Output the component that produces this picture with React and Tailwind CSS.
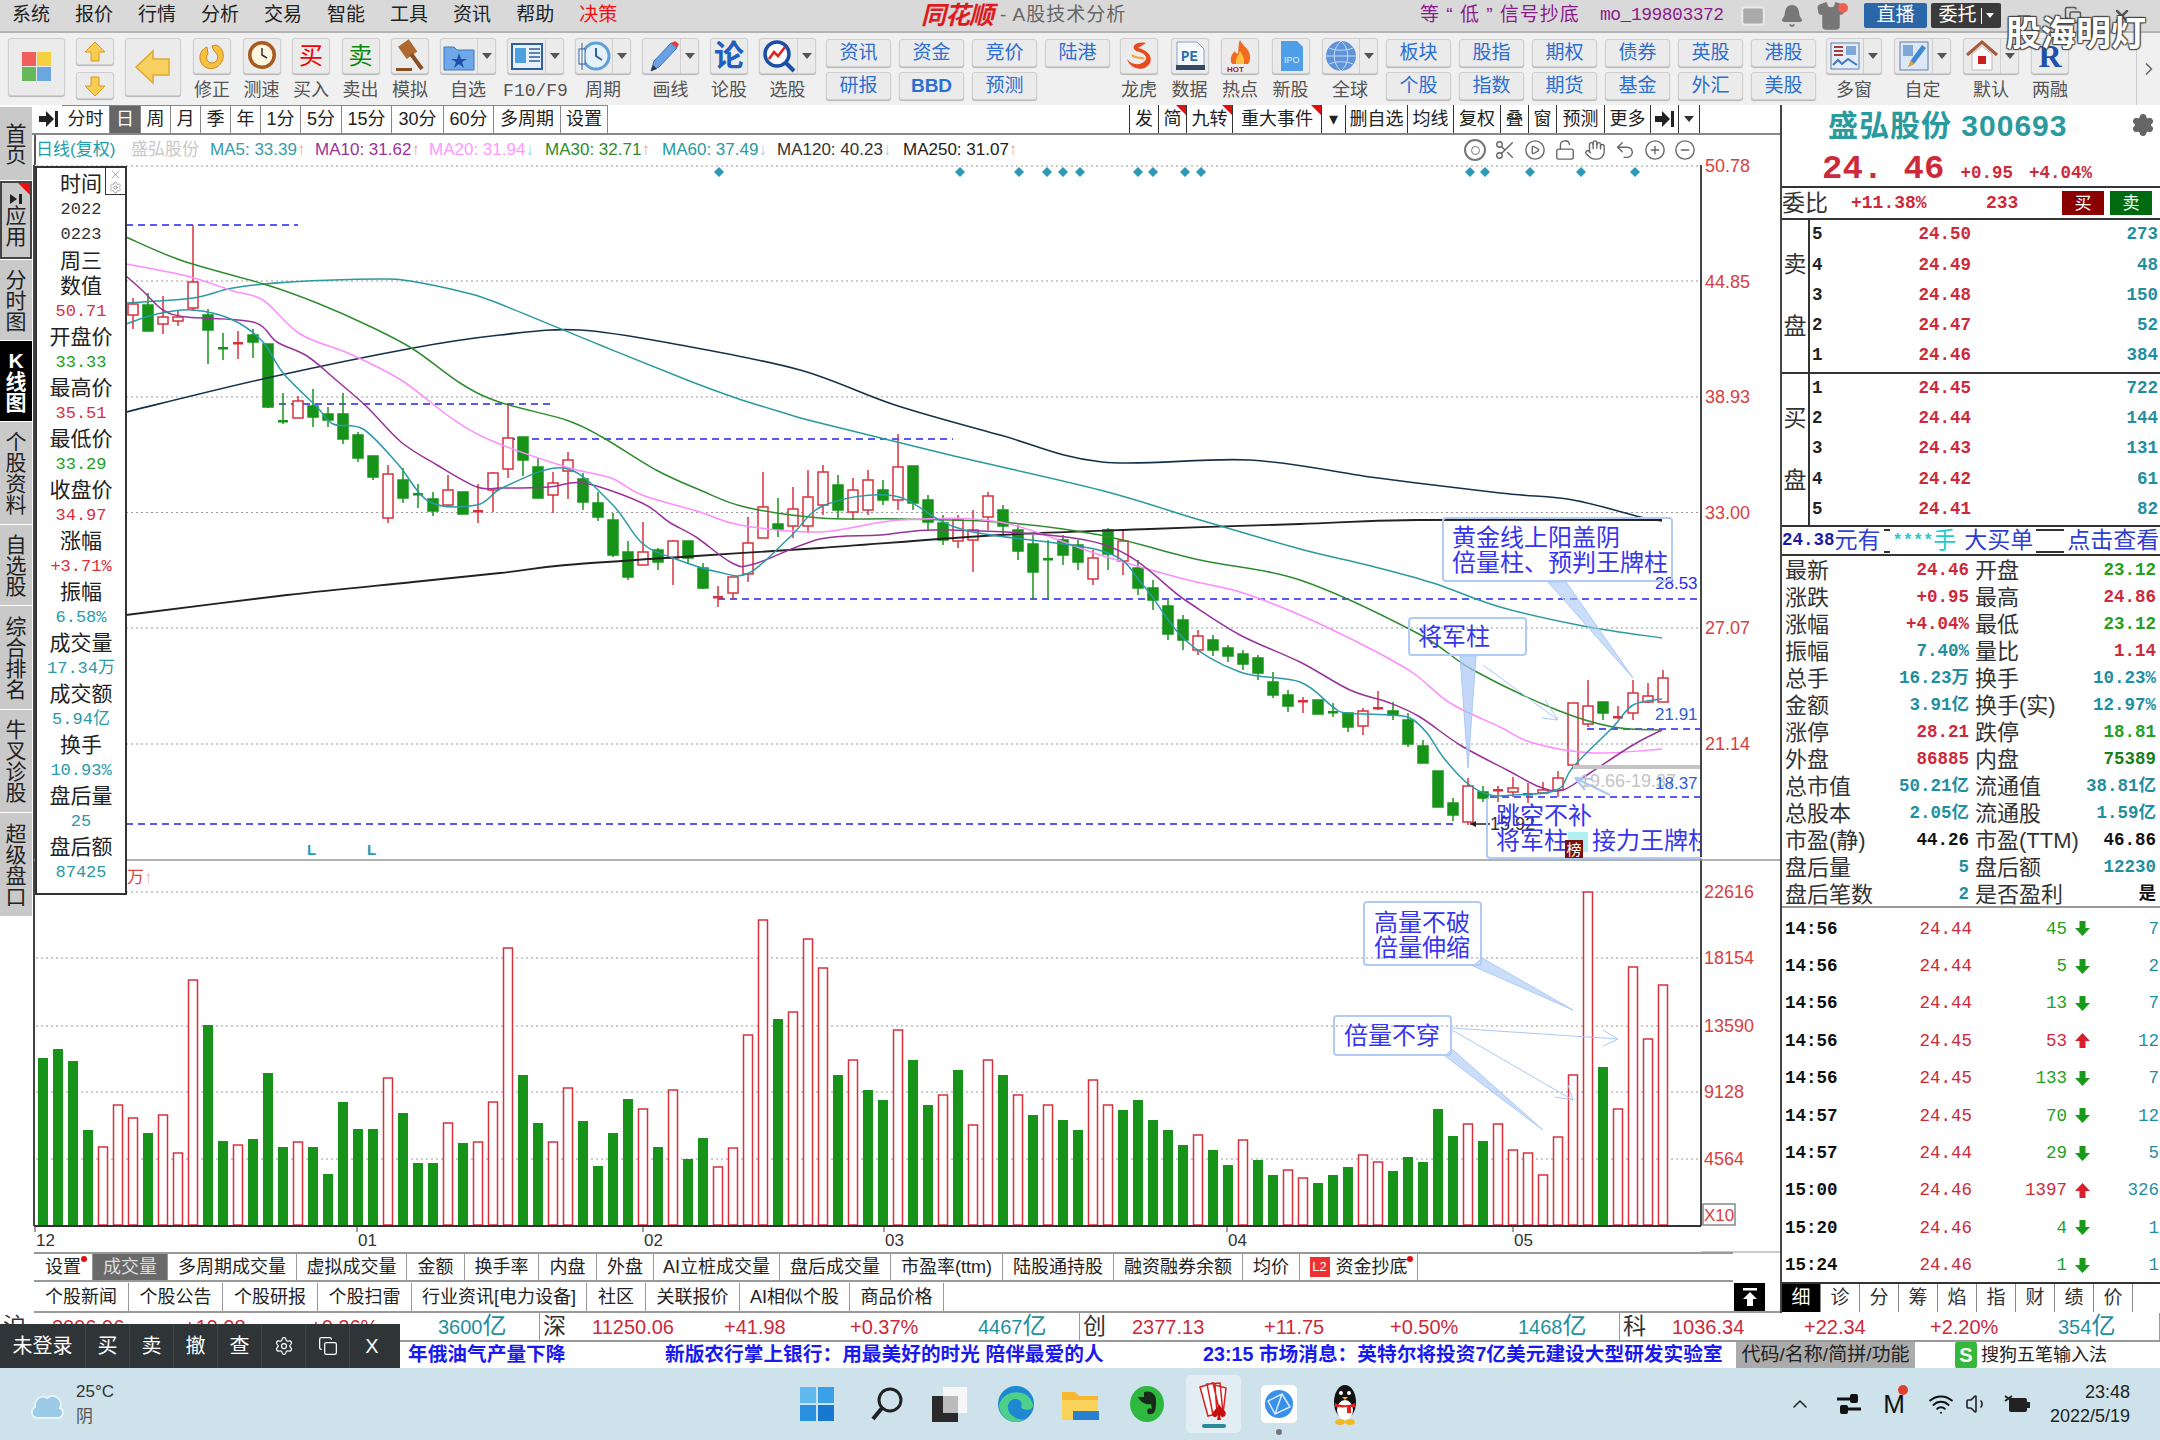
import React from "react";
import { Scissors, Hand, Undo2, CirclePlus, CircleMinus, CirclePlay, LockOpen, Settings, ChevronUp, Wifi, Volume1, Mail, Bell, Shirt, Copy, X, Minus, ChevronRight } from "lucide-react";

const sans = "[font-family:'Liberation_Sans','Noto_Sans_CJK_SC',sans-serif]";
const mono = "[font-family:'Liberation_Mono','Noto_Sans_CJK_SC',monospace]";

// x, type (u red hollow / d green), body top, body bottom, high, low -- page pixels
const candles = [
  [133, "u", 304, 315, 298, 329], [148, "d", 305, 331, 293, 331], [163, "u", 317, 324, 296, 334], [178, "u", 317, 321, 310, 326],
  [193, "u", 282, 308, 225, 311], [208, "d", 315, 330, 309, 364], [223, "d", 347, 348, 333, 360], [238, "u", 342, 343, 331, 359],
  [253, "d", 335, 342, 329, 358], [268, "d", 344, 407, 344, 408], [283, "d", 420, 421, 393, 424], [298, "u", 401, 418, 396, 418],
  [313, "d", 406, 417, 389, 427], [328, "d", 414, 420, 407, 427], [343, "d", 414, 439, 393, 444], [358, "d", 435, 458, 432, 462],
  [373, "d", 456, 477, 456, 480], [388, "u", 474, 518, 465, 523], [403, "d", 480, 498, 468, 503], [418, "d", 493, 494, 484, 508],
  [433, "d", 499, 511, 492, 516], [448, "u", 490, 505, 475, 507], [463, "d", 492, 514, 492, 514], [478, "u", 510, 511, 484, 523],
  [493, "u", 473, 490, 472, 512], [508, "u", 438, 469, 403, 478], [523, "d", 437, 460, 437, 476], [538, "d", 467, 498, 458, 498],
  [553, "u", 483, 495, 472, 513], [568, "u", 460, 471, 452, 499], [583, "d", 479, 502, 473, 510], [598, "d", 503, 517, 492, 521],
  [613, "d", 520, 555, 513, 557], [628, "d", 552, 577, 541, 580], [643, "u", 552, 565, 522, 565], [658, "d", 550, 562, 548, 570],
  [673, "u", 541, 558, 540, 585], [688, "d", 541, 558, 541, 564], [703, "d", 568, 588, 563, 589], [718, "u", 596, 597, 586, 607],
  [733, "u", 577, 593, 577, 600], [748, "u", 543, 574, 517, 582], [763, "u", 507, 538, 472, 538], [778, "d", 524, 529, 498, 537],
  [793, "u", 509, 526, 487, 538], [808, "u", 497, 526, 470, 533], [823, "u", 472, 505, 465, 515], [838, "d", 485, 510, 475, 518],
  [853, "u", 490, 512, 478, 520], [868, "u", 480, 510, 470, 515], [883, "d", 490, 500, 480, 505], [898, "u", 467, 500, 434, 510],
  [913, "d", 466, 503, 466, 510], [928, "d", 500, 522, 495, 530], [943, "d", 523, 540, 515, 545], [958, "u", 520, 541, 515, 548],
  [973, "u", 530, 540, 510, 572], [988, "u", 496, 517, 492, 530], [1003, "d", 510, 526, 505, 535], [1018, "d", 530, 551, 525, 560],
  [1033, "d", 544, 572, 535, 600], [1048, "d", 558, 559, 540, 600], [1063, "d", 540, 555, 535, 565], [1078, "d", 545, 562, 540, 570],
  [1093, "u", 558, 579, 550, 585], [1108, "d", 530, 554, 528, 570], [1123, "u", 541, 561, 530, 575], [1138, "d", 568, 588, 560, 595],
  [1153, "d", 588, 600, 580, 610], [1168, "d", 606, 634, 600, 640], [1183, "d", 620, 640, 615, 650], [1198, "u", 636, 650, 630, 655],
  [1213, "d", 640, 650, 635, 656], [1228, "d", 648, 656, 645, 662], [1243, "d", 654, 664, 650, 670], [1258, "d", 658, 673, 655, 680],
  [1273, "d", 682, 695, 672, 698], [1288, "d", 695, 706, 690, 712], [1303, "u", 700, 701, 697, 713], [1318, "d", 700, 714, 700, 714],
  [1333, "d", 711, 712, 703, 717], [1348, "d", 713, 727, 713, 732], [1363, "u", 711, 726, 708, 735], [1378, "u", 707, 708, 691, 710],
  [1393, "d", 711, 715, 702, 720], [1408, "d", 720, 744, 713, 747], [1423, "d", 746, 763, 740, 763], [1438, "d", 771, 807, 771, 807],
  [1453, "d", 803, 815, 798, 821], [1468, "u", 786, 822, 778, 825], [1483, "d", 792, 798, 786, 802], [1498, "u", 789, 790, 786, 802],
  [1513, "u", 788, 792, 777, 797], [1528, "u", 793, 794, 783, 803], [1543, "u", 790, 793, 782, 793], [1558, "u", 778, 790, 771, 797],
  [1573, "u", 703, 765, 703, 769], [1588, "u", 706, 724, 680, 727], [1603, "d", 702, 713, 702, 720], [1618, "u", 716, 717, 706, 719],
  [1633, "u", 693, 713, 680, 720], [1648, "u", 696, 702, 683, 703], [1663, "u", 678, 702, 670, 702],
];

// volume bar tops from x=43 in 15px steps, "u" red hollow / "d" green
const volumes = [
  ["d", 1058], ["d", 1049], ["d", 1061], ["d", 1130], ["u", 1147], ["u", 1105], ["u", 1118], ["d", 1133], ["u", 1115], ["u", 1153],
  ["u", 980], ["d", 1025], ["d", 1141], ["u", 1145], ["d", 1139], ["d", 1073], ["d", 1147], ["u", 1142], ["d", 1147], ["d", 1174],
  ["d", 1102], ["d", 1129], ["d", 1129], ["u", 1078], ["d", 1113], ["d", 1163], ["d", 1163], ["u", 1123], ["d", 1143], ["u", 1142],
  ["u", 1102], ["u", 948], ["d", 1075], ["d", 1123], ["u", 1142], ["u", 1088], ["d", 1121], ["d", 1166], ["d", 1133], ["d", 1099],
  ["u", 1109], ["d", 1147], ["u", 1090], ["d", 1159], ["d", 1138], ["u", 1167], ["u", 1148], ["u", 1035], ["u", 920], ["d", 1019],
  ["u", 1012], ["u", 939], ["u", 968], ["d", 1075], ["u", 1060], ["d", 1090], ["d", 1100], ["u", 1030], ["d", 1060], ["d", 1105],
  ["u", 1095], ["d", 1070], ["u", 1125], ["u", 1060], ["d", 1075], ["u", 1095], ["d", 1115], ["u", 1105], ["d", 1120], ["d", 1130],
  ["u", 1080], ["u", 1105], ["d", 1110], ["d", 1100], ["d", 1120], ["d", 1130], ["d", 1145], ["u", 1135], ["d", 1150], ["d", 1165],
  ["u", 1140], ["d", 1160], ["d", 1175], ["u", 1170], ["u", 1178], ["d", 1183], ["d", 1175], ["d", 1167], ["u", 1155], ["u", 1162],
  ["d", 1171], ["d", 1157], ["d", 1162], ["d", 1109], ["d", 1136], ["u", 1124], ["d", 1141], ["u", 1124], ["u", 1150], ["u", 1153],
  ["u", 1175], ["u", 1137], ["u", 1075], ["u", 892], ["d", 1067], ["u", 1109], ["u", 967], ["u", 1039], ["u", 985],
];

const maLines = [
  { color: "#16304a", w: 1.6, pts: [[126, 412], [267, 378], [413, 348], [500, 335], [580, 330], [680, 345], [800, 370], [895, 405], [1000, 435], [1102, 462], [1250, 460], [1378, 478], [1500, 493], [1573, 500], [1640, 517], [1662, 521]] },
  { color: "#222222", w: 1.8, pts: [[126, 615], [287, 595], [413, 582], [500, 573], [566, 565], [696, 556], [820, 548], [1000, 535], [1150, 529], [1300, 524], [1417, 520], [1662, 520]] },
  { color: "#2a9a9e", w: 1.5, pts: [[126, 303], [193, 298], [233, 288], [290, 282], [380, 279], [410, 281], [467, 293], [500, 304], [600, 345], [687, 380], [736, 398], [781, 412], [820, 423], [950, 455], [1100, 490], [1200, 520], [1300, 549], [1367, 565], [1433, 583], [1500, 607], [1583, 626], [1662, 638]] },
  { color: "#2f8b2f", w: 1.5, pts: [[126, 237], [183, 261], [267, 285], [317, 303], [367, 325], [413, 349], [460, 383], [499, 402], [566, 420], [602, 437], [656, 470], [700, 490], [745, 507], [820, 518], [900, 519], [1000, 522], [1100, 535], [1200, 560], [1300, 580], [1417, 633], [1473, 670], [1557, 710], [1613, 727], [1662, 730]] },
  { color: "#ff8cff", w: 1.5, pts: [[126, 264], [187, 276], [233, 291], [263, 300], [300, 334], [350, 354], [401, 380], [450, 417], [490, 440], [566, 467], [611, 478], [642, 495], [700, 512], [740, 525], [820, 532], [900, 520], [1000, 522], [1100, 555], [1180, 578], [1240, 592], [1300, 615], [1367, 647], [1413, 673], [1450, 703], [1500, 727], [1533, 743], [1593, 753], [1662, 749]] },
  { color: "#993399", w: 1.5, pts: [[126, 276], [143, 291], [163, 310], [187, 317], [253, 322], [277, 342], [307, 356], [336, 380], [367, 407], [401, 442], [437, 465], [477, 487], [500, 488], [549, 487], [584, 483], [642, 503], [669, 522], [696, 537], [732, 563], [754, 564], [820, 539], [880, 535], [950, 530], [1102, 544], [1185, 600], [1240, 635], [1300, 662], [1350, 690], [1390, 703], [1420, 717], [1460, 745], [1507, 770], [1540, 787], [1563, 790], [1590, 773], [1633, 745], [1662, 730]] },
  { color: "#2a9aa8", w: 1.5, pts: [[126, 324], [157, 314], [193, 310], [233, 320], [263, 342], [283, 373], [317, 407], [333, 424], [363, 429], [397, 463], [430, 502], [477, 505], [504, 487], [564, 468], [611, 503], [642, 543], [673, 558], [718, 572], [749, 573], [790, 537], [825, 505], [895, 496], [964, 530], [1102, 551], [1143, 585], [1185, 640], [1240, 672], [1300, 682], [1333, 707], [1347, 713], [1390, 715], [1410, 718], [1427, 733], [1443, 757], [1467, 783], [1490, 795], [1513, 795], [1557, 790], [1573, 767], [1613, 727], [1633, 705], [1662, 699]] },
];

function smooth(pts) {
  let d = `M${pts[0][0]} ${pts[0][1]}`;
  for (let i = 0; i < pts.length - 1; i++) {
    const p0 = pts[i - 1] || pts[i], p1 = pts[i], p2 = pts[i + 1], p3 = pts[i + 2] || p2;
    d += ` C${p1[0] + (p2[0] - p0[0]) / 6} ${p1[1] + (p2[1] - p0[1]) / 6} ${p2[0] - (p3[0] - p1[0]) / 6} ${p2[1] - (p3[1] - p1[1]) / 6} ${p2[0]} ${p2[1]}`;
  }
  return d;
}

function Ic({ s = 34, v = "0 0 34 34", children }) {
  return <svg width={s} height={s} viewBox={v}>{children}</svg>;
}

function Btn({ w = "w-[38px]", h = "h-[36px]", children, drop }) {
  return (
    <div className={`${w} ${h} flex items-center rounded-[3px] border border-[#cfcfcf] bg-[#ebebeb] shadow-[0_1px_1px_#b5b5b5]`}>
      <div className="flex flex-1 items-center justify-center">{children}</div>
      {drop && (
        <div className="flex h-full w-[18px] items-center justify-center border-l border-[#cfcfcf]">
          <div className="h-0 w-0 border-x-[5px] border-t-[6px] border-x-transparent border-t-[#555]" />
        </div>
      )}
    </div>
  );
}

function Tool({ w = "w-[38px]", label, drop, className = "", children }) {
  return (
    <div className={`flex flex-col items-center ${w} ${className}`}>
      <Btn w={w} drop={drop}>{children}</Btn>
      <div className="mt-[4px] whitespace-nowrap text-[18px] leading-[24px] text-[#555]">{label}</div>
    </div>
  );
}

function TextBtn({ children, bold }) {
  return (
    <div className={`flex h-[28px] w-[65px] items-center justify-center rounded-[3px] border border-[#cfcfcf] bg-[#ebebeb] text-[19px] text-[#2b6fd0] shadow-[0_1px_1px_#b5b5b5] ${bold ? "font-bold" : ""}`}>
      {children}
    </div>
  );
}

function TextGroup({ top, bottom, className = "" }) {
  return (
    <div className={`mt-[1px] flex flex-col gap-[5px] ${className}`}>
      <div className="flex gap-[8px]">{top.map((t) => <TextBtn key={t}>{t}</TextBtn>)}</div>
      <div className="flex gap-[8px]">{bottom.map((t) => <TextBtn key={t} bold={t === "BBD"}>{t}</TextBtn>)}</div>
    </div>
  );
}

function MenuBar() {
  return (
    <div className="flex h-[33px] items-center border-b-2 border-[#b4b4b4] bg-[#d9d9d9] pl-[12px] text-[19px]">
      <div className="flex w-[909px] gap-[25px] text-[#222]">
        {["系统", "报价", "行情", "分析", "交易", "智能", "工具", "资讯", "帮助"].map((m) => <span key={m}>{m}</span>)}
        <span className="text-[#f01010]">决策</span>
      </div>
      <span className="w-[79px] text-[25px] font-bold italic leading-none tracking-[-1px] text-[#dd1c22]">同花顺</span>
      <span className="w-[420px] tracking-[1px] text-[#666]">- A股技术分析</span>
      <span className="w-[180px] whitespace-nowrap tracking-[1px] text-[#8b1a8b]">等 “ 低 ” 信号抄底</span>
      <span className={`w-[140px] text-[18px] text-[#8b1a8b] ${mono} tracking-[-0.5px]`}>mo_199803372</span>
      <Mail size={26} fill="#aaa" stroke="#e8e8e8" />
      <Bell size={24} fill="#777" stroke="#777" className="ml-[14px]" />
      <div className="relative ml-[12px]">
        <Shirt size={30} fill="#777" stroke="#777" />
        <div className="absolute right-[-2px] top-[2px] h-[10px] w-[10px] rounded-full bg-[#f06050]" />
      </div>
      <div className="ml-[18px] flex h-[25px] w-[63px] items-center justify-center rounded-[2px] bg-[#2a66a8] text-white">直播</div>
      <div className="ml-[4px] flex h-[25px] w-[70px] items-center justify-center gap-[4px] rounded-[2px] bg-[#3a3a3a] text-white">
        委托<span className="h-[16px] w-px bg-white" /><span className="h-0 w-0 border-x-[4px] border-t-[5px] border-x-transparent border-t-white" />
      </div>
      <div className="ml-[13px] flex gap-[30px] text-[#555]">
        <Minus size={20} /><Copy size={18} /><X size={20} strokeWidth={3} />
      </div>
    </div>
  );
}

function Toolbar() {
  return (
    <div className="flex h-[72px] items-start bg-[#f0f0f0] pl-[8px] pt-[5px]">
      <Btn w="w-[57px]" h="h-[58px]">
        <Ic s={32} v="0 0 32 32">
          <rect x="1" y="1" width="14" height="14" fill="#f0605a" /><rect x="16" y="1" width="14" height="14" fill="#f5d040" />
          <rect x="1" y="16" width="14" height="14" fill="#66b85a" /><rect x="16" y="16" width="14" height="14" fill="#6aa6e0" />
        </Ic>
      </Btn>
      <div className="ml-[11px] flex flex-col gap-[7px]">
        <Btn h="h-[27px]"><Ic s={24} v="0 0 24 24"><path d="M12 2 L22 12 H16 V21 H8 V12 H2Z" fill="#f8cc50" stroke="#d89a20" /></Ic></Btn>
        <Btn h="h-[27px]"><Ic s={24} v="0 0 24 24"><path d="M12 22 L22 12 H16 V3 H8 V12 H2Z" fill="#f8cc50" stroke="#d89a20" /></Ic></Btn>
      </div>
      <div className="ml-[11px]">
        <Btn w="w-[56px]" h="h-[58px]"><Ic s={38} v="0 0 38 38"><path d="M2 19 L19 3 V11 H35 V27 H19 V35Z" fill="#f8d060" stroke="#e0a830" strokeWidth="1.5" /></Ic></Btn>
      </div>
      <div className="ml-[12px] flex gap-[11.5px]">
        <Tool label="修正"><Ic><path d="M21 6 C30 9 31 22 22 28 C13 33 4 26 5 17 C6 12 9 9 12 8 L13 15 C10 18 12 24 17 24 C23 24 25 16 19 12 L17 7Z" fill="#f6c040" stroke="#c88a20" /></Ic></Tool>
        <Tool label="测速"><Ic><circle cx="17" cy="16" r="14" fill="#a85a20" /><circle cx="17" cy="16" r="10.5" fill="#fdf6e0" /><path d="M17 9 V16 L22 19" stroke="#333" strokeWidth="1.5" fill="none" /></Ic></Tool>
        <Tool label="买入"><span className="text-[24px] leading-none text-[#f00000]">买</span></Tool>
        <Tool label="卖出"><span className="text-[24px] leading-none text-[#0a8a0a]">卖</span></Tool>
        <Tool label="模拟"><Ic><rect x="8" y="3" width="13" height="15" transform="rotate(-35 14 10)" fill="#b06a30" /><path d="M18 15 L29 30" stroke="#8a4f20" strokeWidth="4" /><rect x="3" y="29" width="16" height="3" fill="#8a4f20" /></Ic></Tool>
      </div>
      <div className="ml-[11px] flex gap-[11px]">
        <Tool w="w-[56px]" label="自选" drop><Ic><path d="M2 8 H12 L15 11 H32 V31 H2Z" fill="#6fa8e8" stroke="#3f78c0" /><path d="M17 14 L19 20 H25 L20 23 L22 29 L17 25 L12 29 L14 23 L9 20 H15Z" fill="#1f4fa8" /></Ic></Tool>
        <Tool w="w-[57px]" label={<span className={mono}>F10/F9</span>} drop><Ic><rect x="2" y="5" width="30" height="25" fill="#e8f0fa" stroke="#2f5f9f" strokeWidth="2" /><rect x="5" y="9" width="11" height="15" fill="#4f9fe0" /><path d="M19 10 H30 M19 14 H30 M19 18 H30 M19 22 H30" stroke="#2f5f9f" strokeWidth="1.5" /></Ic></Tool>
        <Tool w="w-[56px]" label="周期" drop><Ic><circle cx="19" cy="17" r="13" fill="#e4f0fa" stroke="#5f9fd8" strokeWidth="3" /><path d="M19 9 V17 L25 21" stroke="#2f5f9f" strokeWidth="2" fill="none" /><rect x="2" y="10" width="6" height="15" fill="#fff" stroke="#2f5f9f" /><path d="M5 4 V31" stroke="#2f5f9f" /></Ic></Tool>
        <Tool w="w-[57px]" label="画线" drop><Ic><path d="M6 32 L9 22 L26 4 L32 9 L14 28Z" fill="#6aa0e0" stroke="#3f78c0" /><path d="M26 4 L32 9 L34 5 L30 2Z" fill="#e04040" /><path d="M6 32 L8 26 L12 30Z" fill="#333" /></Ic></Tool>
        <Tool label="论股"><span className="text-[30px] font-bold leading-none text-[#1f5fc0]">论</span></Tool>
        <Tool w="w-[57px]" label="选股" drop><Ic><circle cx="15" cy="15" r="12" fill="#fff" stroke="#1a4fa8" strokeWidth="3.5" /><path d="M24 24 L32 32" stroke="#1a4fa8" strokeWidth="4" /><path d="M7 20 L12 13 L16 17 L23 8" stroke="#e02020" strokeWidth="2.5" fill="none" /></Ic></Tool>
      </div>
      <TextGroup className="ml-[10px]" top={["资讯", "资金", "竞价", "陆港"]} bottom={["研报", "BBD", "预测"]} />
      <div className="ml-[10px] flex gap-[12.5px]">
        <Tool label="龙虎"><Ic><path d="M24 4 C14 2 8 8 14 12 C24 14 28 20 20 24 C14 27 8 24 5 20 C8 30 22 34 28 24 C32 16 22 10 16 9 Z" fill="#e84a20" /><path d="M10 16 C14 20 20 18 22 20" stroke="#f8a030" strokeWidth="2" fill="none" /></Ic></Tool>
        <Tool label="数据"><Ic><path d="M4 3 H24 L31 10 V27 H4Z" fill="#f4f8fc" stroke="#8aa0c0" /><rect x="3" y="26" width="29" height="5" fill="#334a66" /><text x="8" y="22" fontSize="14" fontWeight="bold" fill="#2b6fb0" fontFamily="Liberation Mono">PE</text></Ic></Tool>
        <Tool label="热点"><Ic><path d="M17 1 C20 8 28 10 27 19 C27 22 26 24 25 25 H9 C6 20 9 15 12 12 C13 15 14 15 15 14 C16 10 15 5 17 1Z" fill="#f06a20" /><path d="M17 12 C19 16 22 18 21 25 H13 C12 20 15 17 17 12Z" fill="#fcc040" /><text x="4" y="33" fontSize="8" fontWeight="bold" fill="#b01010" fontFamily="Liberation Sans">HOT</text></Ic></Tool>
        <Tool label="新股"><Ic><path d="M7 2 H23 L29 8 V32 H7Z" fill="#4f9fe8" /><text x="10" y="24" fontSize="9" fill="#dff0ff" fontFamily="Liberation Sans">IPO</text></Ic></Tool>
        <Tool w="w-[56px]" label="全球" drop><Ic><circle cx="17" cy="17" r="15" fill="#5f94d8" /><path d="M2 17 H32 M17 2 C8 10 8 24 17 32 M17 2 C26 10 26 24 17 32 M5 9 C12 12 22 12 29 9 M5 25 C12 22 22 22 29 25" stroke="#c8dcf4" fill="none" /></Ic></Tool>
      </div>
      <TextGroup className="ml-[8px]" top={["板块", "股指", "期权", "债券", "英股", "港股"]} bottom={["个股", "指数", "期货", "基金", "外汇", "美股"]} />
      <div className="ml-[10px] flex gap-[12px]">
        <Tool w="w-[56px]" label="多窗" drop><Ic><rect x="3" y="4" width="28" height="26" fill="#e4ecf8" stroke="#5f7fb0" /><path d="M6 8 H15 M6 12 H15 M6 16 H15" stroke="#a04040" strokeWidth="2" /><rect x="18" y="7" width="10" height="9" fill="#7fa8d8" /><path d="M5 26 L10 21 L14 25 L20 20 L29 26" stroke="#3f78c0" fill="none" strokeWidth="2" /></Ic></Tool>
        <Tool w="w-[57px]" label="自定" drop><Ic><rect x="3" y="3" width="28" height="28" fill="#dde8f6" stroke="#5f7fb0" /><rect x="6" y="6" width="10" height="11" fill="#7fa8d8" /><path d="M11 28 L14 21 L25 6 L29 9 L17 25Z" fill="#3f88d0" /><path d="M11 28 L14 21 L17 25Z" fill="#e8a030" /></Ic></Tool>
        <Tool w="w-[56px]" label="默认" drop><Ic><path d="M2 16 L17 3 L32 16" stroke="#a85a3a" strokeWidth="3" fill="none" /><path d="M7 15 V31 H27 V15 L17 7Z" fill="#fafafa" stroke="#bbb" /><rect x="13" y="17" width="8" height="8" fill="#cc2020" /></Ic></Tool>
        <Tool label="两融"><span className="[font-family:'Liberation_Serif',serif] text-[32px] font-bold leading-none text-[#1f4fa8]">R</span></Tool>
      </div>
      <div className="ml-auto mt-[-5px] flex h-[72px] w-[24px] items-center justify-center border-l border-[#ccc] text-[#666]"><ChevronRight size={20} /></div>
    </div>
  );
}

const sideItems = [
  { t: ["首", "页"], h: "h-[73px]" },
  { t: ["应", "用"], h: "h-[78px]", app: true },
  { t: ["分", "时", "图"], h: "h-[80px]" },
  { t: ["K", "线", "图"], h: "h-[80px]", active: true },
  { t: ["个", "股", "资", "料"], h: "h-[102px]" },
  { t: ["自", "选", "股"], h: "h-[80px]" },
  { t: ["综", "合", "排", "名"], h: "h-[103px]" },
  { t: ["牛", "叉", "诊", "股"], h: "h-[102px]" },
  { t: ["超", "级", "盘", "口"], h: "h-[103px]" },
];

function Sidebar() {
  return (
    <div className="flex w-[32px] flex-col gap-[1px] bg-white pt-[2px]">
      {sideItems.map((it) => (
        <div key={it.t.join("")} className={`relative flex flex-col items-center justify-center text-[21px] leading-[21px] ${it.h} ${it.active ? "bg-black font-bold text-white" : "bg-[#c9c9c9] text-[#222]"} ${it.app ? "border-2 border-[#444]" : ""}`}>
          {it.app && <div className="absolute right-0 top-0 h-0 w-0 border-l-[12px] border-t-[12px] border-l-transparent border-t-[#f01010]" />}
          {it.app && (
            <svg width="14" height="12" viewBox="0 0 14 12"><path d="M1 1 L8 6 L1 11Z M10 1 H13 V11 H10Z" fill="#222" /></svg>
          )}
          {it.t.map((c) => <span key={c}>{c}</span>)}
        </div>
      ))}
    </div>
  );
}

const leftTabs = [
  ["分时", "w-[48px]"], ["日", "w-[31px]"], ["周", "w-[30px]"], ["月", "w-[30px]"], ["季", "w-[30px]"], ["年", "w-[30px]"], ["1分", "w-[40px]"],
  ["5分", "w-[41px]"], ["15分", "w-[50px]"], ["30分", "w-[52px]"], ["60分", "w-[50px]"], ["多周期", "w-[67px]"], ["设置", "w-[47px]"],
];
const rightTabs = [
  ["发", "w-[29px]"], ["简", "w-[28px]", true], ["九转", "w-[46px]", true], ["重大事件", "w-[89px]", true], ["▾", "w-[24px]"], ["删自选", "w-[62px]"],
  ["均线", "w-[46px]"], ["复权", "w-[47px]"], ["叠", "w-[28px]"], ["窗", "w-[28px]"], ["预测", "w-[48px]"], ["更多", "w-[46px]"],
];

function ArrowBar() {
  return (
    <svg width="22" height="18" viewBox="0 0 22 18">
      <path d="M1 6 H8 V1 L16 9 L8 17 V12 H1Z M17 1 H20 V17 H17Z" fill="#222" />
    </svg>
  );
}

function TopTabs() {
  return (
    <div className="flex h-[30px] items-stretch border-b-2 border-[#888] pl-[3px] text-[18px] text-[#222]">
      <div className="flex w-[27px] items-center justify-center"><ArrowBar /></div>
      {leftTabs.map(([t, w]) => (
        <div key={t} className={`flex items-center justify-center border-r border-t border-[#888] ${w} ${t === "日" ? "bg-[#666] text-white" : "bg-white"}`}>{t}</div>
      ))}
      <div className="w-[521px]" />
      {rightTabs.map(([t, w, tri]) => (
        <div key={t} className={`relative flex items-center justify-center border-l border-[#333] ${w}`}>
          {tri && <div className="absolute right-0 top-0 h-0 w-0 border-l-[10px] border-t-[10px] border-l-transparent border-t-[#e01010]" />}
          {t}
        </div>
      ))}
      <div className="flex w-[28px] items-center justify-center border-l border-[#333]"><ArrowBar /></div>
      <div className="flex w-[22px] items-center justify-center border-x border-[#333]"><span className="h-0 w-0 border-x-[5px] border-t-[6px] border-x-transparent border-t-[#333]" /></div>
    </div>
  );
}

const maHeader = [
  ["日线(复权)", "w-[95px]", "text-[#1e9ea8]"],
  ["盛弘股份", "w-[79px]", "text-[#c8c8c8]"],
  ["MA5: 33.39", "w-[105px]", "text-[#3a9aa8]", "↑", "text-[#f5a0a0]"],
  ["MA10: 31.62", "w-[114px]", "text-[#993399]", "↑", "text-[#f5a0a0]"],
  ["MA20: 31.94", "w-[116px]", "text-[#ff99ff]", "↓", "text-[#88ddee]"],
  ["MA30: 32.71", "w-[117px]", "text-[#2f8b2f]", "↑", "text-[#f5a0a0]"],
  ["MA60: 37.49", "w-[115px]", "text-[#2a9a9e]", "↓", "text-[#88ddee]"],
  ["MA120: 40.23", "w-[126px]", "text-[#333]", "↓", "text-[#88ddee]"],
  ["MA250: 31.07", "w-[120px]", "text-[#222]", "↑", "text-[#f5a0a0]"],
];

function MaHeader() {
  return (
    <div className="ml-[2px] flex h-[30px] items-center whitespace-nowrap border-l-2 border-[#555] text-[17px]">
      {maHeader.map(([t, w, c, a, ac]) => (
        <div key={t} className={`${w} ${c}`}>{t}{a && <span className={ac}>{a}</span>}</div>
      ))}
    </div>
  );
}

const gridK = [166, 281, 397, 512.5, 628, 744];
const gridV = [892, 958, 1026, 1092, 1159];
const priceLabels = [["50.78", 166], ["44.85", 282], ["38.93", 397], ["33.00", 513], ["27.07", 628], ["21.14", 744]];
const volLabels = [["22616", 892], ["18154", 958], ["13590", 1026], ["9128", 1092], ["4564", 1159]];
const months = [["12", 36], ["01", 358], ["02", 644], ["03", 885], ["04", 1228], ["05", 1514]];
const diamonds = [719, 960, 1019, 1047, 1063, 1080, 1138, 1153, 1185, 1201, 1470, 1485, 1530, 1581, 1635];
const dashes = [[126, 298, 225], [267, 551, 404], [508, 953, 439], [718, 1700, 599], [126, 1453, 824], [1587, 1700, 729], [1490, 1700, 797]];

function ChartSvg() {
  const txt = "Liberation Sans, Noto Sans CJK SC, sans-serif";
  return (
    <svg width="1748" height="1085" viewBox="32 165 1748 1085" className="absolute left-0 top-0 overflow-visible">
      {[...gridK, ...gridV].map((y) => <line key={y} x1="36" x2="1700" y1={y} y2={y} stroke="#999" strokeDasharray="2 3" />)}
      {dashes.map(([a, b, y]) => <line key={y} x1={a} x2={b} y1={y} y2={y} stroke="#2222ee" strokeWidth="1.5" strokeDasharray="7 5" />)}
      {candles.map(([x, t, top, bot, hi, lo]) => {
        const c = t === "u" ? "#d8303c" : "#17931a";
        const thin = bot - top < 3;
        return (
          <g key={x}>
            <line x1={x} x2={x} y1={hi} y2={lo} stroke={c} strokeWidth="1.5" />
            {thin
              ? <rect x={x - 5} y={top} width="10" height="2.5" fill={c} />
              : <rect x={x - 5} y={top} width="10" height={bot - top} fill={t === "u" ? "#fff" : c} stroke={c} strokeWidth="1.5" />}
          </g>
        );
      })}
      {volumes.map(([t, y], i) => {
        const x = 43 + 15 * i;
        return t === "u"
          ? <rect key={x} x={x - 4.5} y={y} width="9" height={1225 - y} fill="#fff" stroke="#d8303c" strokeWidth="1.5" />
          : <rect key={x} x={x - 5} y={y} width="10" height={1226 - y} fill="#17931a" />;
      })}
      {maLines.map((l) => <path key={l.color} d={smooth(l.pts)} fill="none" stroke={l.color} strokeWidth={l.w} />)}
      {diamonds.map((x) => <path key={x} d={`M${x} 167 l5 5 l-5 5 l-5 -5z`} fill="#2a9ab8" />)}

      {/* callout tails */}
      <g fill="#a9c8f5" stroke="#a9c8f5">
        <path d="M1548 582 L1633 678 L1566 582Z" fillOpacity="0.6" />
        <path d="M1460 656 L1468 768 L1476 656Z" fillOpacity="0.7" />
        <path d="M1473 966 L1573 1010 L1482 958Z" fillOpacity="0.6" />
        <path d="M1445 1056 L1543 1130 L1452 1049Z" fillOpacity="0.6" />
        <path d="M1575 778 L1610 795 M1575 778 L1592 779 M1575 778 L1585 790" fill="none" strokeWidth="2" />
        <g fill="none" strokeWidth="1">
          <path d="M1483 665 L1558 720 M1542 718 L1558 720 L1545 700" />
          <path d="M1452 1028 L1618 1039 M1603 1030 L1618 1039 L1603 1046" />
          <path d="M1452 1030 L1573 1100 M1555 1097 L1573 1100 L1568 1085" />
        </g>
      </g>

      <rect x="1573" y="765" width="127" height="4" fill="#c4c4c4" />
      <text x="1580" y="787" fontSize="18" fill="#c4c4c4" fontFamily={txt}>19.66-19.37</text>
      <path d="M1470 824 H1490" stroke="#222" strokeWidth="1.5" />
      <path d="M1470 824 l6 -3 v6z" fill="#222" />
      <text x="1490" y="830" fontSize="18" fill="#333" fontFamily={txt}>15.92</text>

      <text x="1655" y="589" fontSize="17" fill="#2a2aee" fontFamily={txt}>28.53</text>
      <text x="1655" y="720" fontSize="17" fill="#2a5fd8" fontFamily={txt}>21.91</text>
      <text x="1655" y="789" fontSize="17" fill="#2a5fd8" fontFamily={txt}>18.37</text>

      <text x="307" y="855" fontSize="15" fontWeight="bold" fill="#2a9ab0" fontFamily={txt}>L</text>
      <text x="367" y="855" fontSize="15" fontWeight="bold" fill="#2a9ab0" fontFamily={txt}>L</text>
      <text x="127" y="883" fontSize="17" fill="#d44" fontFamily={txt}>万<tspan fill="#f5b0a0">↑</tspan></text>

      <line x1="34" x2="34" y1="165" y2="1226" stroke="#444" strokeWidth="2" />
      <line x1="1701" x2="1701" y1="165" y2="1226" stroke="#444" strokeWidth="2" />
      <line x1="34" x2="1780" y1="860" y2="860" stroke="#999" strokeWidth="1.5" />
      <line x1="34" x2="1701" y1="1226" y2="1226" stroke="#333" strokeWidth="2" />
      <line x1="1701" x2="1780" y1="1252" y2="1252" stroke="#999" />

      {priceLabels.map(([t, y]) => <text key={t} x="1705" y={y + 6} fontSize="18" fill="#d84040" fontFamily={txt}>{t}</text>)}
      {volLabels.map(([t, y]) => <text key={t} x="1704" y={y + 6} fontSize="18" fill="#d84040" fontFamily={txt}>{t}</text>)}
      <rect x="1703" y="1204" width="32" height="21" fill="#fff" stroke="#888" strokeWidth="1.5" />
      <text x="1704" y="1221" fontSize="17" fill="#d84040" fontFamily={txt}>X10</text>
      {months.map(([t, x]) => (
        <g key={t}>
          <line x1={x - 1} x2={x - 1} y1="1226" y2="1232" stroke="#444" />
          <text x={x} y="1246" fontSize="17" fill="#333" fontFamily={txt}>{t}</text>
        </g>
      ))}
    </svg>
  );
}

const infoRows = [
  ["时间"], ["2022"], ["0223"], ["周三"], ["数值"], ["50.71", "text-[#d83040]"], ["开盘价"], ["33.33", "text-[#22a022]"], ["最高价"], ["35.51", "text-[#d83040]"],
  ["最低价"], ["33.29", "text-[#22a022]"], ["收盘价"], ["34.97", "text-[#d83040]"], ["涨幅"], ["+3.71%", "text-[#d83040]"], ["振幅"], ["6.58%", "text-[#2a9aa8]"],
  ["成交量"], ["17.34万", "text-[#2a9aa8]"], ["成交额"], ["5.94亿", "text-[#2a9aa8]"], ["换手"], ["10.93%", "text-[#2a9aa8]"], ["盘后量"], ["25", "text-[#2a9aa8]"], ["盘后额"], ["87425", "text-[#2a9aa8]"],
];

function InfoPanel() {
  return (
    <div className="absolute left-[3px] top-[1px] h-[729px] w-[92px] border-2 border-[#333] bg-white pt-[3px] text-center">
      {infoRows.map(([t, c], i) => (
        <div key={i} className={`h-[25.5px] whitespace-nowrap leading-[25.5px] ${c ? `${mono} text-[17px] ${c}` : /\d/.test(t) ? `${mono} text-[17px] text-[#333]` : "text-[21px] text-[#222]"}`}>{t}</div>
      ))}
      <div className="absolute right-0 top-0 flex h-[27px] w-[20px] flex-col items-center border-b border-l border-[#333] bg-white text-[#666]">
        <X size={13} strokeWidth={1} />
        <Settings size={13} strokeWidth={1} />
      </div>
    </div>
  );
}

function Callouts() {
  const box = "absolute rounded-[4px] border-2 border-[#b0ccf5] text-[#3636ee] leading-[25px] text-[24px]";
  return (
    <>
      <div className={`${box} left-[1410px] top-[352px] h-[65px] w-[231px] whitespace-nowrap pl-[8px] pt-[6px]`}>
        <div>黄金线上阳盖阴</div>
        <div>倍量柱、预判王牌柱</div>
      </div>
      <div className={`${box} left-[1376px] top-[452px] h-[39px] w-[119px] pl-[8px] pt-[5px]`}>将军柱</div>
      <div className={`${box} left-[1454px] top-[632px] h-[62px] w-[216px] overflow-hidden whitespace-nowrap rounded-r-none border-r-0 border-t-0 pl-[8px] pt-[6px]`}>
        <div>跳空不补</div>
        <div>将军柱<span className="ml-[24px]">接力王牌柱</span></div>
      </div>
      <div className="absolute left-[1536px] top-[667px] h-[20px] w-[20px] bg-[#aef0f0]" />
      <div className="absolute left-[1533px] top-[675px] flex h-[18px] w-[18px] items-center justify-center bg-[#7a1010] text-[15px] leading-none text-white">榜</div>
      <div className={`${box} left-[1331px] top-[736px] h-[65px] w-[119px] pl-[9px] pt-[7px]`}>
        <div>高量不破</div>
        <div>倍量伸缩</div>
      </div>
      <div className={`${box} left-[1301px] top-[850px] h-[41px] w-[119px] pl-[9px] pt-[6px]`}>倍量不穿</div>
    </>
  );
}

function ChartToolIcons() {
  const c = "text-[#666]";
  return (
    <div className="absolute left-[1432px] top-[-27px] flex h-[24px] items-center gap-[8px]">
      <div className="flex h-[22px] w-[22px] items-center justify-center rounded-full border-2 border-[#777]"><div className="h-[9px] w-[9px] rounded-full border border-[#777]" /></div>
      <Scissors size={22} className={c} strokeWidth={1.5} />
      <CirclePlay size={22} className={c} strokeWidth={1.5} />
      <LockOpen size={22} className={c} strokeWidth={1.5} />
      <Hand size={22} className={c} strokeWidth={1.5} />
      <Undo2 size={22} className={c} strokeWidth={1.5} />
      <CirclePlus size={22} className={c} strokeWidth={1.5} />
      <CircleMinus size={22} className={c} strokeWidth={1.5} />
    </div>
  );
}

const bottomTabs = [
  ["设置", "w-[59px]", "dot"], ["成交量", "w-[75px]", "active"], ["多周期成交量", "w-[129px]"], ["虚拟成交量", "w-[110px]"], ["金额", "w-[58px]"], ["换手率", "w-[74px]"], ["内盘", "w-[58px]"], ["外盘", "w-[57px]"],
  ["AI立桩成交量", "w-[126px]"], ["盘后成交量", "w-[111px]"], ["市盈率(ttm)", "w-[112px]"], ["陆股通持股", "w-[111px]"], ["融资融券余额", "w-[129px]"], ["均价", "w-[57px]"],
];
const newsTabs = [
  ["个股新闻", "w-[95px]"], ["个股公告", "w-[94px]"], ["个股研报", "w-[95px]"], ["个股扫雷", "w-[94px]"], ["行业资讯[电力设备]", "w-[175px]"], ["社区", "w-[59px]"], ["关联报价", "w-[94px]"], ["AI相似个股", "w-[110px]"], ["商品价格", "w-[94px]"],
];

function BottomTabs() {
  return (
    <div className="relative text-[18px] text-[#222]">
      <div className="h-[2px]" />
      <div className="ml-[2px] flex h-[30px] w-[1699px] items-stretch border-y-2 border-[#999]">
        {bottomTabs.map(([t, w, m]) => (
          <div key={t} className={`relative flex items-center justify-center whitespace-nowrap border-r border-[#999] ${w} ${m === "active" ? "bg-[#6a6a6a] text-[#ddd]" : ""}`}>
            {t}
            {m === "dot" && <span className="absolute right-[5px] top-[2px] h-[6px] w-[6px] rounded-full bg-[#e01010]" />}
          </div>
        ))}
        <div className="relative flex w-[118px] items-center justify-center gap-[6px] border-r border-[#999]">
          <span className="flex h-[20px] w-[20px] items-center justify-center bg-[#f03030] text-[13px] text-white">L2</span>
          资金抄底
          <span className="absolute right-[4px] top-[2px] h-[6px] w-[6px] rounded-full bg-[#e01010]" />
        </div>
      </div>
      <div className="ml-[2px] mt-[1px] flex h-[30px] w-[1746px] items-stretch border-b-2 border-[#999]">
        {newsTabs.map(([t, w]) => (
          <div key={t} className={`flex items-center justify-center whitespace-nowrap border-r border-[#999] ${w}`}>{t}</div>
        ))}
        <div className="flex-1" />
        <div className="mr-[15px] flex w-[31px] items-center justify-center bg-black">
          <svg width="16" height="20" viewBox="0 0 16 20"><path d="M1 1 H15 V3.5 H1Z M8 5 L15 12 H11 V19 H5 V12 H1Z" fill="#fff" /></svg>
        </div>
      </div>
    </div>
  );
}

function ChartColumn() {
  return (
    <div className="flex w-[1748px] flex-col">
      <TopTabs />
      <MaHeader />
      <div className="relative h-[1085px] w-[1748px]">
        <ChartSvg />
        <ChartToolIcons />
        <InfoPanel />
        <Callouts />
      </div>
      <BottomTabs />
    </div>
  );
}

const sells = [["5", "24.50", "273"], ["4", "24.49", "48"], ["3", "24.48", "150"], ["2", "24.47", "52"], ["1", "24.46", "384"]];
const buys = [["1", "24.45", "722"], ["2", "24.44", "144"], ["3", "24.43", "131"], ["4", "24.42", "61"], ["5", "24.41", "82"]];

const R = "text-[#cc2a3a]", T = "text-[#1f8f9f]", G = "text-[#22a022]", K = "text-[#111]";
const stats = [
  ["最新", "24.46", R, "开盘", "23.12", G], ["涨跌", "+0.95", R, "最高", "24.86", R], ["涨幅", "+4.04%", R, "最低", "23.12", G], ["振幅", "7.40%", T, "量比", "1.14", R],
  ["总手", "16.23万", T, "换手", "10.23%", T], ["金额", "3.91亿", T, "换手(实)", "12.97%", T], ["涨停", "28.21", R, "跌停", "18.81", G], ["外盘", "86885", R, "内盘", "75389", "text-[#1a7f1a]"],
  ["总市值", "50.21亿", T, "流通值", "38.81亿", T], ["总股本", "2.05亿", T, "流通股", "1.59亿", T], ["市盈(静)", "44.26", K, "市盈(TTM)", "46.86", K], ["盘后量", "5", T, "盘后额", "12230", T], ["盘后笔数", "2", T, "是否盈利", "是", K],
];
const trades = [
  ["14:56", "24.44", "45", 0, "7"], ["14:56", "24.44", "5", 0, "2"], ["14:56", "24.44", "13", 0, "7"], ["14:56", "24.45", "53", 1, "12"], ["14:56", "24.45", "133", 0, "7"],
  ["14:57", "24.45", "70", 0, "12"], ["14:57", "24.44", "29", 0, "5"], ["15:00", "24.46", "1397", 1, "326"], ["15:20", "24.46", "4", 0, "1"], ["15:24", "24.46", "1", 0, "1"],
];

function OrderBook({ rows, side }) {
  return (
    <div className="flex h-[153.5px] border-b-2 border-[#333]">
      <div className="flex w-[28px] flex-col items-center justify-around border-r-2 border-[#333] py-[14px] text-[23px] leading-none text-[#333]">
        <span>{side}</span><span>盘</span>
      </div>
      <div className="flex flex-1 flex-col">
        {rows.map(([n, p, v]) => (
          <div key={n} className={`flex h-[30.25px] shrink-0 items-center font-bold ${mono} text-[17.5px] leading-none`}>
            <span className="w-[17px] pl-[2px] text-[#222]">{n}</span>
            <span className={`w-[144px] text-right ${R}`}>{p}</span>
            <span className={`flex-1 pr-[2px] text-right ${T}`}>{v}</span>
          </div>
        ))}
      </div>
    </div>
  );
}

function TradeArrow({ up }) {
  const c = up ? "#d8202c" : "#1a9a1a";
  return (
    <svg width="17" height="17" viewBox="0 0 17 17" className="ml-[7px]">
      <path d={up ? "M8.5 1 L16 9 H11.5 V16 H5.5 V9 H1Z" : "M8.5 16 L16 8 H11.5 V1 H5.5 V8 H1Z"} fill={c} />
    </svg>
  );
}

function RightPanel() {
  const sub = ["细", "诊", "分", "筹", "焰", "指", "财", "绩", "价"];
  return (
    <div className="flex w-[380px] flex-col border-l-2 border-[#444]">
      <div className="relative h-[83px] border-b-2 border-[#333]">
        <div className="absolute left-[46px] top-[2px] whitespace-nowrap text-[30px] font-bold leading-[38px] tracking-[1px] text-[#2a9a9e]">盛弘股份 300693</div>
        <Settings size={24} fill="#666" stroke="#666" className="absolute right-[5px] top-[8px]" />
        <div className={`absolute left-[40px] top-[46px] flex items-baseline whitespace-nowrap ${mono} font-bold ${R}`}>
          <span className="text-[34px] leading-[36px]">24. 46</span>
          <span className="ml-[16px] text-[17.5px]">+0.95</span>
          <span className="ml-[16px] text-[17.5px]">+4.04%</span>
        </div>
      </div>
      <div className="flex h-[32px] items-center border-b-2 border-[#333] text-[#333]">
        <span className="w-[60px] text-[23px] leading-none">委比</span>
        <span className={`ml-[9px] w-[135px] ${mono} text-[18px] font-bold ${R}`}>+11.38%</span>
        <span className={`w-[67px] ${mono} text-[18px] font-bold ${R}`}>233</span>
        <span className="ml-[9px] flex h-[24px] w-[42px] items-center justify-center bg-[#8a0000] text-[17px] leading-none text-white">买</span>
        <span className="ml-[6px] flex h-[24px] w-[42px] items-center justify-center bg-[#006a10] text-[17px] leading-none text-white">卖</span>
      </div>
      <OrderBook rows={sells} side="卖" />
      <OrderBook rows={buys} side="买" />
      <div className="flex h-[29px] items-center whitespace-nowrap border-b-2 border-[#333] text-[23px] leading-none text-[#2f3fd0]">
        <b className={`${mono} text-[17.5px] text-[#1a1aa8]`}>24.38</b>元有
        <span className="mx-[3px] h-[24px] w-[6px] border-y-2 border-[#333]" />
        <b className={`${mono} text-[17px] text-[#22cccc]`}>****</b><span className="text-[#22cccc]">手</span>
        <span className="ml-[8px]">大买单</span>
        <span className="mx-[3px] h-[24px] w-[28px] border-y-2 border-[#333]" />
        <span>点击查看</span>
      </div>
      <div className="flex h-[352px] flex-col border-b-2 border-[#999] pl-[3px] pr-[4px] pt-[1.5px]">
        {stats.map(([a, b, bc, c, d, dc]) => (
          <div key={a} className="flex h-[27px] shrink-0 items-center whitespace-nowrap leading-none">
            <span className="w-[80px] text-[22px] text-[#333]">{a}</span>
            <span className={`w-[104px] text-right ${mono} text-[17.5px] font-bold ${bc}`}>{b}</span>
            <span className="ml-[6px] w-[100px] text-[22px] text-[#333]">{c}</span>
            <span className={`flex-1 text-right ${mono} text-[17.5px] font-bold ${dc}`}>{d}</span>
          </div>
        ))}
      </div>
      <div className="flex h-[376px] flex-col overflow-hidden border-b-2 border-[#333] pt-[2px]">
        {trades.map(([tm, p, v, up, n], i) => (
          <div key={i} className={`flex h-[37.4px] shrink-0 items-center whitespace-nowrap ${mono} text-[17.5px]`}>
            <span className="w-[72px] pl-[3px] font-bold text-[#111]">{tm}</span>
            <span className={`w-[118px] text-right ${R}`}>{p}</span>
            <span className={`w-[95px] text-right ${up ? R : G}`}>{v}</span>
            <TradeArrow up={up} />
            <span className={`flex-1 pr-[1px] text-right ${T}`}>{n}</span>
          </div>
        ))}
      </div>
      <div className="flex h-[28px] items-stretch text-[19px] text-[#333]">
        {sub.map((t, i) => (
          <div key={t} className={`flex w-[39px] items-center justify-center border-r border-[#888] ${i === 0 ? "bg-black text-white" : ""}`}>{t}</div>
        ))}
      </div>
    </div>
  );
}

const markets = [
  ["沪", "3096.96", "+19.98", "+0.26%", "3600"],
  ["深", "11250.06", "+41.98", "+0.37%", "4467"],
  ["创", "2377.13", "+11.75", "+0.50%", "1468"],
  ["科", "1036.34", "+22.34", "+2.20%", "354"],
];

function IndexRow() {
  return (
    <div className="flex h-[29px] border-b-2 border-[#999]">
      {markets.map(([n, a, b, c, d]) => (
        <div key={n} className="flex w-[540px] items-center whitespace-nowrap border-r border-[#999] text-[20px]">
          <span className="w-[50px] pl-[3px] text-[23px] leading-none text-[#333]">{n}</span>
          <span className="w-[130px] pl-[2px] text-[#cc2a3a]">{a}</span>
          <span className="w-[125px] pl-[4px] text-[#cc2a3a]">{b}</span>
          <span className="w-[133px] pl-[5px] text-[#cc2a3a]">{c}</span>
          <span className="flex-1 text-[#1f8f9f]">{d}<span className="text-[24px] leading-none">亿</span></span>
        </div>
      ))}
    </div>
  );
}

function TickerRow() {
  return (
    <div className="flex h-[26px] items-center overflow-hidden whitespace-nowrap text-[19.7px] font-bold text-[#1a1aee]">
      <span className="ml-[408px] w-[257px]">年俄油气产量下降</span>
      <span className="w-[538px]">新版农行掌上银行：用最美好的时光 陪伴最爱的人</span>
      <span className="w-[533px]">23:15 市场消息：英特尔将投资7亿美元建设大型研发实验室</span>
      <span className="flex h-full w-[179px] items-center justify-center bg-[#ababab] text-[19px] font-normal text-[#222]">代码/名称/简拼/功能</span>
      <span className="flex h-full flex-1 items-center gap-[4px] bg-white pl-[40px] text-[18px] font-normal text-[#222]">
        <span className="flex h-[28px] w-[22px] items-center justify-center rounded-[4px] bg-[#35b83a] text-[20px] font-bold leading-none text-white">S</span>
        搜狗五笔输入法
      </span>
    </div>
  );
}

function FloatBar() {
  return (
    <div className="absolute left-0 top-[1324px] flex h-[44px] w-[400px] items-center bg-[#2f3437] text-[20px] text-white">
      {["未登录", "买", "卖", "撤", "查"].map((t, i) => (
        <span key={t} className={`flex h-full items-center justify-center border-r border-[#444] ${i === 0 ? "w-[86px]" : "w-[44px]"}`}>{t}</span>
      ))}
      <span className="flex h-full w-[44px] items-center justify-center border-r border-[#444]"><Settings size={20} strokeWidth={1.5} /></span>
      <span className="flex h-full w-[44px] items-center justify-center border-r border-[#444]"><Copy size={20} strokeWidth={1.5} /></span>
      <span className="flex h-full w-[44px] items-center justify-center">X</span>
    </div>
  );
}

function Taskbar() {
  return (
    <div className="flex h-[72px] items-center bg-[#cde2ea] text-[#333]">
      <svg width="40" height="40" viewBox="0 0 40 40" className="ml-[28px]">
        <path d="M10 34 C3 34 2 26 7 23 C6 15 14 10 19 14 C26 8 36 16 32 24 C38 27 34 34 30 34Z" fill="#9ccbe8" stroke="#e8f4fa" strokeWidth="2" />
      </svg>
      <div className="ml-[8px] flex w-[70px] flex-col text-[17px] leading-[25px]">
        <span className="whitespace-nowrap">25°C</span>
        <span className="text-[#555]">阴</span>
      </div>
      <svg width="34" height="34" viewBox="0 0 34 34" className="ml-[654px]">
        <rect x="0" y="0" width="16" height="16" fill="#5fb8ee" /><rect x="18" y="0" width="16" height="16" fill="#3aa0e8" />
        <rect x="0" y="18" width="16" height="16" fill="#2a90e0" /><rect x="18" y="18" width="16" height="16" fill="#1878d0" />
      </svg>
      <svg width="36" height="36" viewBox="0 0 36 36" className="ml-[36px]">
        <circle cx="20" cy="14" r="11" fill="none" stroke="#222" strokeWidth="3" />
        <path d="M12 22 L3 33" stroke="#222" strokeWidth="4" />
      </svg>
      <svg width="36" height="36" viewBox="0 0 36 36" className="ml-[25px]">
        <rect x="12" y="1" width="24" height="26" fill="#f6f6f6" />
        <rect x="1" y="10" width="26" height="26" fill="#2a2a2a" />
        <rect x="12" y="10" width="15" height="17" fill="#bbb" />
      </svg>
      <svg width="38" height="38" viewBox="0 0 38 38" className="ml-[30px]">
        <circle cx="19" cy="19" r="18" fill="#1e88d0" />
        <path d="M2 20 C6 4 32 2 36 20 C36 26 26 26 24 22 C28 14 14 10 11 20 C9 30 22 36 28 34 C16 42 2 32 2 20Z" fill="#4fd08a" />
      </svg>
      <svg width="38" height="34" viewBox="0 0 38 34" className="ml-[26px]">
        <path d="M1 5 H14 L18 9 H37 V33 H1Z" fill="#f5b82e" /><rect x="1" y="13" width="36" height="20" fill="#fbd25a" /><rect x="12" y="24" width="26" height="9" fill="#2a80d0" />
      </svg>
      <svg width="36" height="38" viewBox="0 0 36 38" className="ml-[30px]">
        <ellipse cx="18" cy="19" rx="17" ry="18" fill="#2fb83f" />
        <path d="M9 12 H15 V7 C22 5 28 9 27 18 C27 28 24 30 19 29 C17 24 20 22 23 24 L22 19 C17 20 12 18 9 12Z" fill="#1a2a1a" />
      </svg>
      <div className="ml-[21px] flex h-[58px] w-[55px] flex-col items-center justify-center rounded-[5px] bg-[#e2eef3]">
        <svg width="42" height="42" viewBox="0 0 42 42">
          <path d="M7 7 L20 3 L27 33 L15 36Z M14 4 L27 3 L30 33 L20 35Z M22 5 L33 8 L30 34 L24 34Z" fill="#fff" stroke="#d82020" strokeWidth="1.5" />
          <path d="M26 24 C29 30 35 31 32 36 C30 38 28 37 27 35 L28 40 H24 L25 35 C24 37 21 38 20 36 C18 31 24 30 26 24Z" fill="#c81010" />
        </svg>
        <div className="mt-[2px] h-[4px] w-[24px] rounded-full bg-[#2a8a9a]" />
      </div>
      <div className="relative ml-[20px] flex h-[38px] w-[36px] items-center justify-center rounded-[5px] bg-white">
        <svg width="30" height="30" viewBox="0 0 30 30">
          <circle cx="15" cy="15" r="14" fill="#3a8fe8" />
          <path d="M4 12 L18 5 L26 18 L11 25Z M18 5 L11 25" fill="none" stroke="#d8ecff" strokeWidth="1.5" />
        </svg>
        <div className="absolute bottom-[-12px] left-[15px] h-[6px] w-[6px] rounded-full bg-[#777]" />
      </div>
      <svg width="30" height="44" viewBox="0 0 30 44" className="ml-[33px]">
        <ellipse cx="15" cy="20" rx="11" ry="17" fill="#111" />
        <ellipse cx="15" cy="28" rx="8" ry="10" fill="#fff" />
        <circle cx="11" cy="11" r="2" fill="#fff" /><circle cx="19" cy="11" r="2" fill="#fff" />
        <path d="M12 15 H18 L15 18Z" fill="#f5b820" />
        <path d="M5 21 C11 24 19 24 25 21 V25 H21 V31 H17 V25 C12 26 8 25 5 25Z" fill="#e02020" />
        <ellipse cx="10" cy="40" rx="5" ry="3" fill="#f5b820" /><ellipse cx="20" cy="40" rx="5" ry="3" fill="#f5b820" />
      </svg>
      <ChevronUp size={24} strokeWidth={1.5} className="ml-[428px] text-[#222]" />
      <svg width="26" height="24" viewBox="0 0 26 24" className="ml-[24px]">
        <path d="M1 7 H18 M8 17 H25" stroke="#111" strokeWidth="3" /><rect x="14" y="2" width="8" height="9" rx="2" fill="#111" /><rect x="4" y="13" width="8" height="9" rx="2" fill="#111" />
      </svg>
      <div className="relative ml-[20px] w-[24px] text-center text-[26px] leading-none text-[#111]">
        M<span className="absolute right-[-2px] top-[-6px] h-[10px] w-[10px] rounded-full bg-[#e04030]" />
      </div>
      <Wifi size={26} strokeWidth={1.8} className="ml-[22px] text-[#111]" />
      <Volume1 size={24} strokeWidth={1.6} className="ml-[11px] text-[#222]" />
      <svg width="26" height="24" viewBox="0 0 26 24" className="ml-[15px]">
        <rect x="5" y="6" width="18" height="14" rx="2" fill="#222" /><path d="M1 4 L8 9 M1 9 L8 4" stroke="#222" strokeWidth="2" /><rect x="23" y="10" width="3" height="6" fill="#222" />
      </svg>
      <div className="ml-[10px] flex flex-1 flex-col items-end pr-[30px] text-[18px] leading-[24px] text-[#222]">
        <span>23:48</span>
        <span>2022/5/19</span>
      </div>
    </div>
  );
}

export default function App() {
  return (
    <div className={`relative flex h-[1440px] w-[2160px] flex-col overflow-hidden bg-white ${sans}`}>
      <MenuBar />
      <Toolbar />
      <div className="flex h-[1208px]">
        <Sidebar />
        <ChartColumn />
        <RightPanel />
      </div>
      <IndexRow />
      <TickerRow />
      <Taskbar />
      <FloatBar />
      <div className="absolute left-[2006px] top-[14px] text-[35px] font-bold leading-[40px] text-white [text-shadow:1px_1px_1px_#444,-1px_-1px_1px_#444,1px_-1px_1px_#444,-1px_1px_1px_#444]">股海明灯</div>
    </div>
  );
}
